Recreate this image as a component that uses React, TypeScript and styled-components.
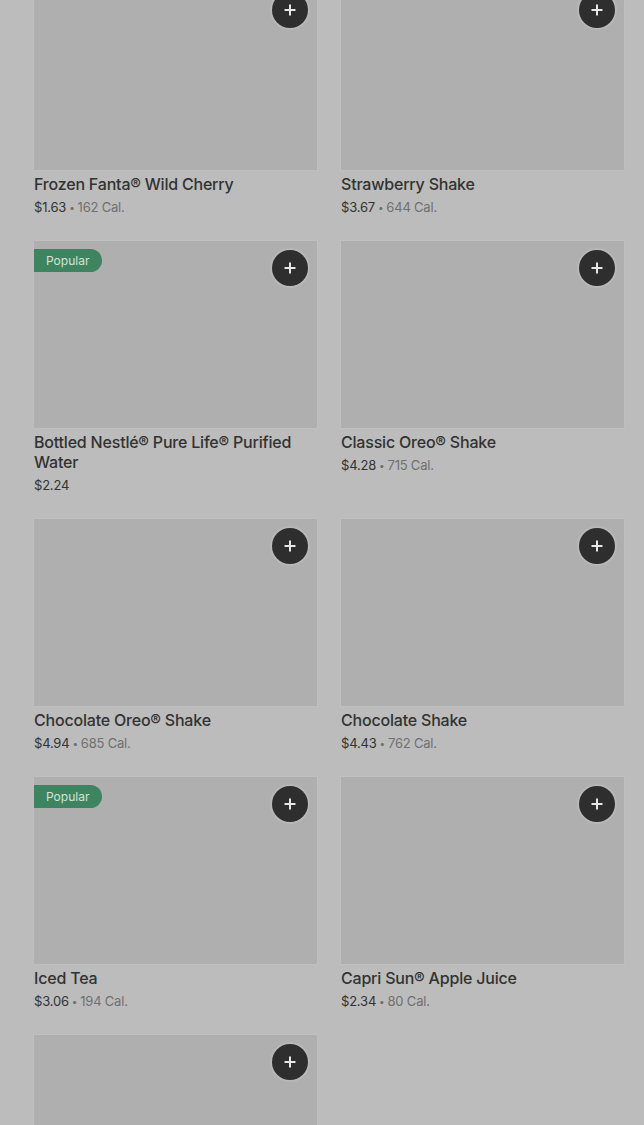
import React from "react";
import styled, { createGlobalStyle } from "styled-components";

const GlobalStyle = createGlobalStyle`
  html, body {
    margin: 0;
    padding: 0;
    background: #bcbcbc;
    font-family: "Inter", "Roboto", "Liberation Sans", sans-serif;
  }
  * { box-sizing: border-box; }
`;

type Item = {
  name: string;
  price: string;
  cal?: string;
  popular?: boolean;
};

const items: Item[] = [
  { name: "Frozen Fanta® Wild Cherry", price: "$1.63", cal: "162 Cal." },
  { name: "Strawberry Shake", price: "$3.67", cal: "644 Cal." },
  { name: "Bottled Nestlé® Pure Life® Purified Water", price: "$2.24", popular: true },
  { name: "Classic Oreo® Shake", price: "$4.28", cal: "715 Cal." },
  { name: "Chocolate Oreo® Shake", price: "$4.94", cal: "685 Cal." },
  { name: "Chocolate Shake", price: "$4.43", cal: "762 Cal." },
  { name: "Iced Tea", price: "$3.06", cal: "194 Cal.", popular: true },
  { name: "Capri Sun® Apple Juice", price: "$2.34", cal: "80 Cal." },
  { name: "", price: "" },
];

const Page = styled.div`
  width: 644px;
  height: 1125px;
  overflow: hidden;
  background: #bcbcbc;
`;

const Grid = styled.div`
  display: grid;
  grid-template-columns: 283px 283px;
  column-gap: 24px;
  row-gap: 24px;
  padding: 0 20px 0 34px;
  margin-top: -17px;
  align-items: start;
`;

const Card = styled.div`
  display: flex;
  flex-direction: column;
`;

const Thumb = styled.div`
  position: relative;
  height: 187px;
  background: #afafaf;
  box-shadow: 0 0 0 1px rgba(255, 255, 255, 0.06);
`;

const Badge = styled.span`
  position: absolute;
  top: 8px;
  left: 0;
  height: 23px;
  padding: 0 13px 0 12px;
  display: flex;
  align-items: center;
  background: #3f8461;
  color: #d3e3d8;
  font-size: 12px;
  font-weight: 400;
  border-radius: 0 12px 12px 0;
`;

const AddButton = styled.button`
  position: absolute;
  top: 9px;
  right: 9px;
  width: 36px;
  height: 36px;
  border: none;
  border-radius: 50%;
  background: #2e2e2e;
  box-shadow: 0 0 0 2px rgba(200, 200, 200, 0.35);
  display: flex;
  align-items: center;
  justify-content: center;
  padding: 0;
`;

const Title = styled.div`
  margin-top: 4px;
  font-size: 16px;
  line-height: 20px;
  font-weight: 500;
  letter-spacing: -0.2px;
  color: #323232;
`;

const PriceLine = styled.div`
  margin-top: 3px;
  font-size: 13px;
  line-height: 20px;
  letter-spacing: -0.2px;
  color: #333333;
`;

const Cal = styled.span`
  color: #707070;
`;

const Dot = styled.span`
  color: #707070;
  margin: 0 3px;
  font-size: 10px;
  line-height: 0;
  vertical-align: 1px;
`;

const PlusIcon = () => (
  <svg width="14" height="14" viewBox="0 0 14 14" aria-hidden>
    <path d="M7 1.5v11M1.5 7h11" stroke="#e6e6e6" strokeWidth="2" />
  </svg>
);

export default function App() {
  return (
    <Page>
      <GlobalStyle />
      <Grid>
        {items.map((it, i) => (
          <Card key={i}>
            <Thumb>
              {it.popular && <Badge>Popular</Badge>}
              <AddButton aria-label="Add">
                <PlusIcon />
              </AddButton>
            </Thumb>
            {it.name && <Title>{it.name}</Title>}
            {it.price && (
              <PriceLine>
                {it.price}
                {it.cal && (
                  <>
                    <Dot>•</Dot>
                    <Cal>{it.cal}</Cal>
                  </>
                )}
              </PriceLine>
            )}
          </Card>
        ))}
      </Grid>
    </Page>
  );
}
